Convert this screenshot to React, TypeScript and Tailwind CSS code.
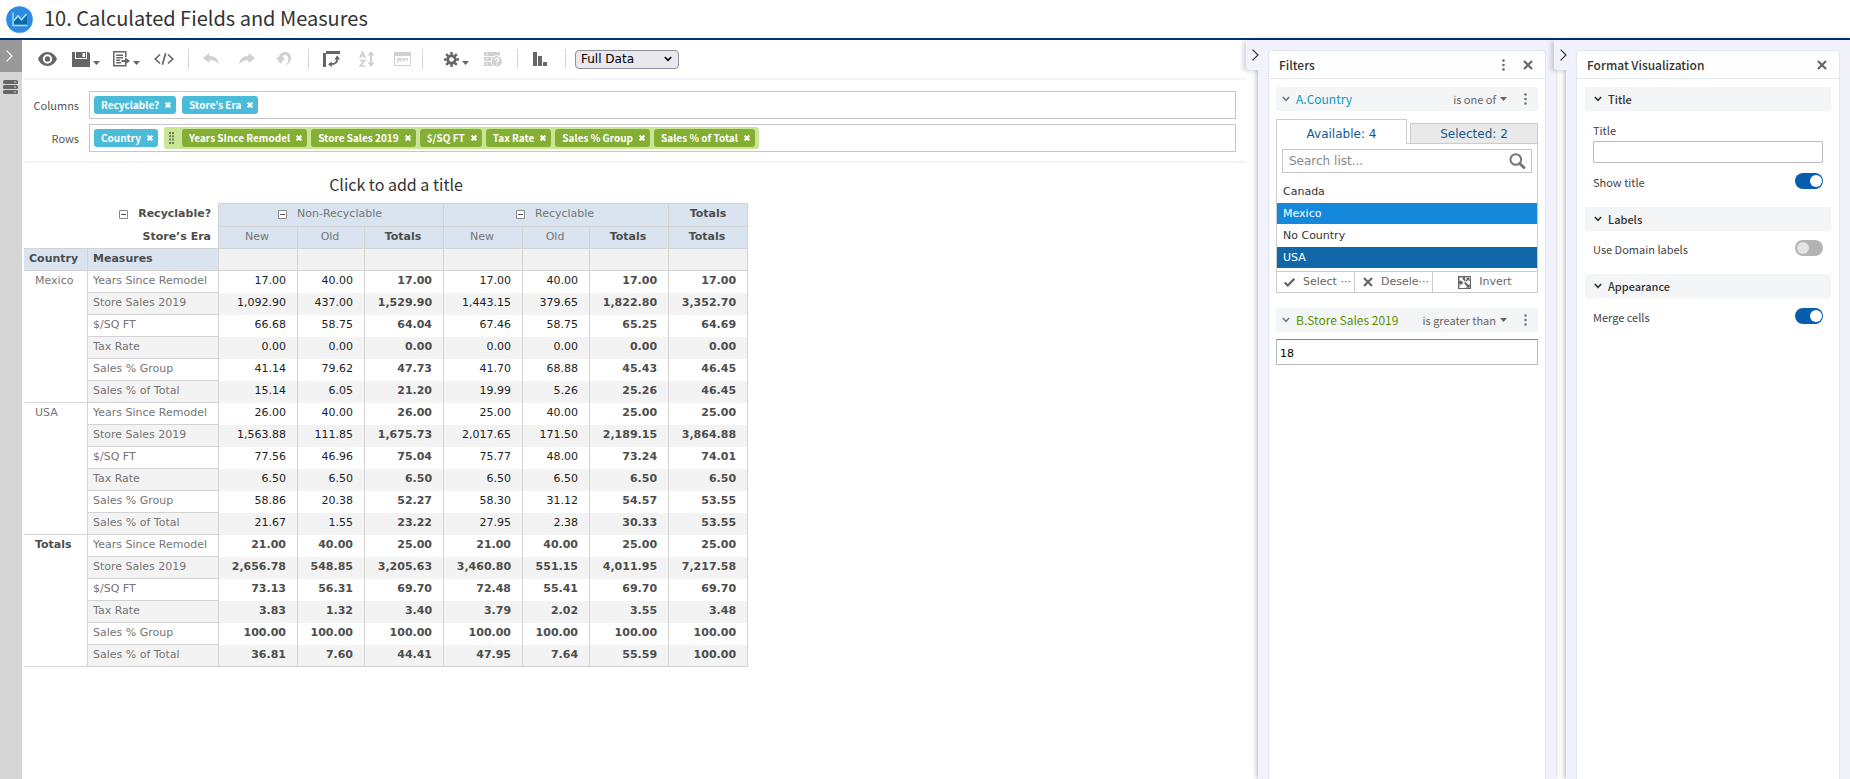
import React, { useState } from 'react';

type Row = { measure: string; values: string[] };
type Group = { name: string; total?: boolean; rows: Row[] };

const MEASURES = ['Years Since Remodel', 'Store Sales 2019', '$/SQ FT', 'Tax Rate', 'Sales % Group', 'Sales % of Total'];

const makeRows = (lines: string[]): Row[] =>
  lines.map((line, i) => ({ measure: MEASURES[i], values: line.split(' ') }));

const groups: Group[] = [
  {
    name: 'Mexico',
    rows: makeRows([
      '17.00 40.00 17.00 17.00 40.00 17.00 17.00',
      '1,092.90 437.00 1,529.90 1,443.15 379.65 1,822.80 3,352.70',
      '66.68 58.75 64.04 67.46 58.75 65.25 64.69',
      '0.00 0.00 0.00 0.00 0.00 0.00 0.00',
      '41.14 79.62 47.73 41.70 68.88 45.43 46.45',
      '15.14 6.05 21.20 19.99 5.26 25.26 46.45',
    ]),
  },
  {
    name: 'USA',
    rows: makeRows([
      '26.00 40.00 26.00 25.00 40.00 25.00 25.00',
      '1,563.88 111.85 1,675.73 2,017.65 171.50 2,189.15 3,864.88',
      '77.56 46.96 75.04 75.77 48.00 73.24 74.01',
      '6.50 6.50 6.50 6.50 6.50 6.50 6.50',
      '58.86 20.38 52.27 58.30 31.12 54.57 53.55',
      '21.67 1.55 23.22 27.95 2.38 30.33 53.55',
    ]),
  },
  {
    name: 'Totals',
    total: true,
    rows: makeRows([
      '21.00 40.00 25.00 21.00 40.00 25.00 25.00',
      '2,656.78 548.85 3,205.63 3,460.80 551.15 4,011.95 7,217.58',
      '73.13 56.31 69.70 72.48 55.41 69.70 69.70',
      '3.83 1.32 3.40 3.79 2.02 3.55 3.48',
      '100.00 100.00 100.00 100.00 100.00 100.00 100.00',
      '36.81 7.60 44.41 47.95 7.64 55.59 100.00',
    ]),
  },
];

const eraHeads = ['New', 'Old', 'Totals', 'New', 'Old', 'Totals', 'Totals'];
const greenFields = ['Years SInce Remodel', 'Store Sales 2019', '$/SQ FT', 'Tax Rate', 'Sales % Group', 'Sales % of Total'];

const Caret = () => (
  <svg width="7" height="4" viewBox="0 0 7 4" fill="currentColor" aria-hidden="true"><path d="M0 0h7L3.500 4z" /></svg>
);

const Chevron: React.FC<{ className?: string }> = ({ className = '' }) => (
  <svg className={className} width="8" height="6" viewBox="0 0 8 6" fill="none" stroke="currentColor" strokeWidth="1.6" aria-hidden="true">
    <path d="M.8 1 4 4.400 7.200 1" />
  </svg>
);

const SideChevron: React.FC<{ className?: string }> = ({ className = '' }) => (
  <svg className={className} width="7" height="12" viewBox="0 0 7 12" fill="none" stroke="currentColor" strokeWidth="1.2" aria-hidden="true">
    <path d="M.6.6 6 6 .6 11.400" />
  </svg>
);

const Kebab = () => (
  <svg width="3" height="12" viewBox="0 0 3 12" fill="currentColor" aria-hidden="true">
    <circle cx="1.500" cy="1.500" r="1.300" /><circle cx="1.500" cy="6" r="1.300" /><circle cx="1.500" cy="10.500" r="1.300" />
  </svg>
);

const Cross = () => (
  <svg width="10" height="10" viewBox="0 0 10 10" fill="none" stroke="currentColor" strokeWidth="2.200" aria-hidden="true">
    <path d="m1 1 8 8M9 1 1 9" />
  </svg>
);

const MinusBox = () => (
  <svg width="9" height="9" viewBox="0 0 9 9" aria-hidden="true">
    <path d="M.5.5h8v8h-8z" fill="#fff" stroke="#8a8a8a" /><path d="M2 4.500h5" stroke="#555" />
  </svg>
);

const ToolButton: React.FC<{ label: string; className?: string; disabled?: boolean; menu?: boolean; children: React.ReactNode }> = ({
  label, className = 'w-9', disabled, menu, children,
}) => (
  <button
    type="button"
    aria-label={label}
    disabled={disabled}
    className={`flex h-8 items-center justify-center ${disabled ? 'text-[#d0d0d0]' : 'text-[#666]'} ${className}`}
  >
    {children}
    {menu && <span className="ml-[3px] mt-2"><Caret /></span>}
  </button>
);

const Separator: React.FC<{ className?: string }> = ({ className = 'ml-[7px] mr-1' }) => (
  <span className={`h-5 w-px bg-[#d6d6d6] ${className}`} />
);

const Toolbar = () => (
  <div className="flex h-10 items-center border-b-2 border-[#f2f2fa] pl-[5px]">
    <ToolButton label="Preview">
      <svg width="19" height="14" viewBox="0 0 19 14" aria-hidden="true">
        <path fill="currentColor" fillRule="evenodd" d="M9.500 0C5 0 1.700 3 0 7c1.700 4 5 7 9.500 7S17.300 11 19 7C17.300 3 14 0 9.500 0Zm0 2.300a4.700 4.700 0 1 1 0 9.400 4.700 4.700 0 0 1 0-9.400Zm0 2a2.700 2.700 0 1 0 0 5.400 2.700 2.700 0 0 0 0-5.400Z" />
      </svg>
    </ToolButton>
    <ToolButton label="Save" menu className="w-[41px]">
      <svg width="18" height="15" viewBox="0 0 18 15" aria-hidden="true">
        <path fill="currentColor" fillRule="evenodd" d="M0 0h3v7h12V0h1.500L18 1.500V15H0V0Zm4 0h10v6H4V0Zm6.500 1v4H13V1h-2.500Z" />
      </svg>
    </ToolButton>
    <ToolButton label="Export" menu className="w-10">
      <svg width="17" height="16" viewBox="0 0 17 16" fill="none" stroke="currentColor" strokeWidth="1.500" aria-hidden="true">
        <path d="M12.800 6V.8H.8v14h12V13" /><path d="M3.200 4.300H10M3.200 6.800H10M3.200 9.300h4M3.200 11.800H8" strokeWidth="1.400" />
        <path d="M8.500 10H13" strokeWidth="2" /><path d="M12 6.200 17 10l-5 3.800z" fill="currentColor" stroke="none" />
      </svg>
    </ToolButton>
    <ToolButton label="View query">
      <svg width="20" height="12" viewBox="0 0 20 12" fill="none" stroke="currentColor" strokeWidth="1.700" aria-hidden="true">
        <path d="M6 1.500 1.200 6 6 10.500M14 1.500 18.800 6 14 10.500M11.600.3 8.400 11.700" />
      </svg>
    </ToolButton>
    <Separator className="ml-1.5 mr-1" />
    <ToolButton label="Undo" disabled>
      <svg width="16" height="12" viewBox="0 0 16 12" fill="currentColor" aria-hidden="true">
        <path d="M6.500 0v3C12 3 15.500 6 16 12c-2-3.500-5-4.800-9.500-4.800v3L0 5.100z" />
      </svg>
    </ToolButton>
    <ToolButton label="Redo" disabled>
      <svg width="16" height="12" viewBox="0 0 16 12" fill="currentColor" aria-hidden="true">
        <path d="M9.500 0v3C4 3 .5 6 0 12c2-3.500 5-4.800 9.500-4.800v3L16 5.100z" />
      </svg>
    </ToolButton>
    <ToolButton label="Undo all" disabled>
      <svg width="15" height="14" viewBox="0 0 15 14" fill="currentColor" aria-hidden="true">
        <path d="M2.400 5.500C3.300 2 6 0 9.300 0 12.700 0 15 2.500 15 5.800c0 3.400-2.200 6.200-5.500 8.200 1.900-2.600 3-4.800 2.800-7C12.200 4.600 11 3 9.200 3 7.700 3 6.600 4 6.200 5.500h3L4.500 12 0 5.500z" />
      </svg>
    </ToolButton>
    <Separator />
    <ToolButton label="Switch to crosstab">
      <svg width="17" height="16" viewBox="0 0 17 16" aria-hidden="true">
        <path d="M0 2h3v14H0zM3 0h14v3H3z" fill="currentColor" />
        <path d="M14.200 8c0 3.800-2.400 5.200-6.200 5.200" fill="none" stroke="currentColor" strokeWidth="1.800" />
        <path d="m14.200 4.200 2.800 4.300h-5.600zM5 13.200l3.800-2.800V16z" fill="currentColor" />
      </svg>
    </ToolButton>
    <ToolButton label="Sort" disabled>
      <svg width="16" height="16" viewBox="0 0 16 16" fill="none" stroke="currentColor" strokeWidth="1.700" aria-hidden="true">
        <path d="M.8 7 3.500.8 6.200 7M1.600 5h3.800M.7 9.600h5L.9 15h5.200" />
        <path d="M12 3v10" strokeWidth="2" /><path d="m12 0 3.500 4.500h-7zM12 16l3.500-4.500h-7z" fill="currentColor" stroke="none" />
      </svg>
    </ToolButton>
    <ToolButton label="Input controls" disabled className="w-[35px]">
      <svg width="17" height="14" viewBox="0 0 17 14" aria-hidden="true">
        <path fill="currentColor" fillRule="evenodd" d="M0 0h17v14H0V0Zm1 4v9h15V4H1Z" />
        <path fill="currentColor" d="M3 6h11v3.500h-1.500V8H11v1.500H9.500V8H8v2H6.500V9H5v2H3z" opacity=".75" />
      </svg>
    </ToolButton>
    <Separator className="ml-0.5 mr-3" />
    <ToolButton label="Options" menu className="w-[42px]">
      <svg width="15" height="15" viewBox="0 0 16 16" aria-hidden="true">
        <circle cx="8" cy="8" r="4" fill="none" stroke="currentColor" strokeWidth="3" />
        <path d="M8 0v3M8 13v3M0 8h3M13 8h3M2.300 2.300l2.200 2.200M11.500 11.500l2.200 2.200M2.300 13.700l2.200-2.200M11.500 4.500l2.200-2.200" stroke="currentColor" strokeWidth="2.600" />
      </svg>
    </ToolButton>
    <ToolButton label="Domain details" disabled className="w-8">
      <svg width="18" height="15" viewBox="0 0 18 15" aria-hidden="true">
        <rect width="16" height="4" rx="1" fill="currentColor" /><rect y="5" width="16" height="4" rx="1" fill="currentColor" />
        <rect y="10" width="12" height="4" rx="1" fill="currentColor" />
        <path d="M2 2h2M2 7h2M2 12h2" stroke="#fff" strokeWidth="1.200" />
        <circle cx="12.800" cy="9.300" r="5.600" fill="currentColor" stroke="#fff" />
        <path d="M11 8c0-2.300 3.700-2.300 3.700-.2 0 1.300-1.800 1.200-1.800 2.800M12.900 11.600v1.300" fill="none" stroke="#fff" strokeWidth="1.300" />
      </svg>
    </ToolButton>
    <Separator className="ml-2 mr-1" />
    <ToolButton label="Chart type">
      <svg width="14" height="14" viewBox="0 0 14 14" fill="currentColor" aria-hidden="true">
        <path d="M0 0h4v14H0zM5 4h4v10H5zM10 10h4v4h-4z" />
      </svg>
    </ToolButton>
    <Separator className="ml-[7px] mr-[9px]" />
    <div className="relative flex items-center">
      <select
        aria-label="Data level"
        className="h-[19px] w-[104px] appearance-none rounded-[4px] border border-[#8f8f9d] bg-[#e9e9ed] pl-[5px] font-['DejaVu_Sans',sans-serif] text-[12px] leading-[17px] text-black"
      >
        <option>Full Data</option>
        <option>Sample Data</option>
      </select>
      <Chevron className="pointer-events-none absolute right-[7px] text-black" />
    </div>
  </div>
);

const Pill: React.FC<{ label: string; tone: string }> = ({ label, tone }) => (
  <span className={`flex h-[18px] items-center rounded-[3px] pl-[7px] pr-[5px] text-[10px] font-bold leading-[18px] text-white ${tone}`}>
    {label}
    <button type="button" aria-label={`Remove ${label}`} className="ml-1.5">
      <svg width="6" height="6" viewBox="0 0 6 6" stroke="currentColor" strokeWidth="2.200" aria-hidden="true"><path d="m.6.6 4.800 4.800M5.400.6.6 5.400" /></svg>
    </button>
  </span>
);

const Shelves = () => (
  <div className="flex flex-col gap-[5px] border-b-2 border-[#f2f2fa] pb-[9px] pl-[5px] pr-[10px] pt-[11px]">
    <div className="flex items-center gap-[10px]">
      <span className="w-[50px] text-right text-[11px] text-[#555]">Columns</span>
      <div className="flex h-7 flex-1 items-center gap-1.5 border border-[#c6c6c6] pl-1">
        <Pill label="Recyclable?" tone="bg-[#4bbbda]" />
        <Pill label="Store’s Era" tone="bg-[#4bbbda]" />
      </div>
    </div>
    <div className="flex items-center gap-[10px]">
      <span className="w-[50px] text-right text-[11px] text-[#555]">Rows</span>
      <div className="flex h-7 flex-1 items-center gap-1.5 border border-[#c6c6c6] pl-1">
        <Pill label="Country" tone="bg-[#4bbbda]" />
        <div className="flex h-[22px] items-center gap-1 rounded-[3px] bg-[#c8e696] pl-[5px] pr-1">
          <svg className="mr-1" width="5" height="12" viewBox="0 0 5 12" fill="#6f7f55" aria-hidden="true">
            <path d="M0 0h2v2H0zM3 0h2v2H3zM0 3.300h2v2H0zM3 3.300h2v2H3zM0 6.600h2v2H0zM3 6.600h2v2H3zM0 10h2v2H0zM3 10h2v2H3z" />
          </svg>
          {greenFields.map((f) => <Pill key={f} label={f} tone="bg-[#84ae34]" />)}
        </div>
      </div>
    </div>
  </div>
);

const isTotalCol = (i: number) => i === 2 || i === 5 || i === 6;

const Crosstab = () => (
  <table className="w-[724px] table-fixed border-separate border-spacing-0 font-['DejaVu_Sans',sans-serif] text-[11px] leading-5 text-[#757575]">
    <colgroup>
      <col className="w-[64px]" /><col className="w-[131px]" />
      <col className="w-[79px]" /><col className="w-[67px]" /><col className="w-[79px]" />
      <col className="w-[79px]" /><col className="w-[67px]" /><col className="w-[79px]" />
      <col className="w-[79px]" />
    </colgroup>
    <thead>
      <tr className="h-6 align-top">
        <th colSpan={2} className="border-r border-t border-[#d3d3d3] border-t-transparent p-0 pr-[7px] text-[#4d4d4d]">
          <span className="flex items-center justify-end gap-[10px]"><MinusBox />Recyclable?</span>
        </th>
        {['Non-Recyclable', 'Recyclable'].map((name) => (
          <th key={name} colSpan={3} className="border-y border-r border-[#d3d3d3] bg-[#d9e4f0] p-0 pr-0.5 font-normal">
            <span className="flex items-center justify-center gap-[10px]"><MinusBox />{name}</span>
          </th>
        ))}
        <th className="border-y border-r border-[#d3d3d3] bg-[#d9e4f0] p-0 text-[#4d4d4d]">Totals</th>
      </tr>
      <tr className="h-[22px] align-top">
        <th colSpan={2} className="border-b border-r border-[#d3d3d3] p-0 pr-[7px] text-right text-[#4d4d4d]">Store’s Era</th>
        {eraHeads.map((h, i) => (
          <th key={i} className={`border-b border-r border-[#d3d3d3] bg-[#d9e4f0] p-0 pr-0.5 ${isTotalCol(i) ? 'text-[#4d4d4d]' : 'font-normal'}`}>{h}</th>
        ))}
      </tr>
      <tr className="h-[22px] text-left align-top text-[#4d4d4d]">
        <th className="border-b border-r border-[#d3d3d3] bg-[#d9e4f0] p-0 pl-[5px]">Country</th>
        <th className="border-b border-r border-[#d3d3d3] bg-[#d9e4f0] p-0 pl-[5px]">Measures</th>
        {eraHeads.map((_, i) => <td key={i} className="border-b border-r border-[#d3d3d3] bg-[#f1f1f1] p-0" />)}
      </tr>
    </thead>
    <tbody>
      {groups.map((g, gi) => g.rows.map((row, ri) => (
        <tr key={g.name + row.measure} className="h-[22px] align-top">
          {ri === 0 && (
            <th rowSpan={6} className={`border-b border-r border-[#d3d3d3] p-0 pl-[11px] text-left ${g.total ? 'text-[#4d4d4d]' : 'font-normal'}`}>
              {g.name}
            </th>
          )}
          <th className={`whitespace-nowrap border-b border-r border-[#d3d3d3] p-0 pl-[5px] text-left font-normal ${ri % 2 ? 'bg-[#f3f3f3]' : ''}`}>
            {row.measure}
          </th>
          {row.values.map((v, i) => (
            <td
              key={i}
              className={`border-r border-[#d3d3d3] p-0 pr-[11px] text-right ${ri % 2 ? 'bg-[#f3f3f3]' : ''} ${g.total || isTotalCol(i) ? 'font-bold text-[#4d4d4d]' : 'text-[#222]'} ${gi === 2 && ri === 5 ? 'border-b' : ''}`}
            >
              {v}
            </td>
          ))}
        </tr>
      )))}
    </tbody>
  </table>
);

// Side panel with its collapse tab on the left rail
const SidePanel: React.FC<{ title: string; menu?: boolean; width: string; children: React.ReactNode }> = ({ title, menu, width, children }) => (
  <section className={`relative flex shrink-0 ${width}`}>
    <button
      type="button"
      aria-label={`Collapse ${title}`}
      className="absolute -left-3 top-0 z-10 flex h-[30px] w-3.5 items-center justify-end rounded-bl-[3px] bg-[#f2f2fc] pr-px text-[#333] shadow-[-3px_1px_4px_rgba(0,0,0,0.16)]"
    >
      <SideChevron />
    </button>
    <div className="flex flex-1 flex-col bg-[#f2f2fc] px-[10px] pt-[10px] shadow-[-1px_0_5px_rgba(0,0,0,0.3)]">
      <div className="flex flex-1 flex-col rounded-t-[4px] border border-b-0 border-[#dfe7ea] bg-white">
        <header className="flex h-7 items-center border-b border-[#dfe7ea] pl-[10px] pr-3 text-[#666]">
          <h2 className="flex-1 text-[12px] font-medium text-[#333]">{title}</h2>
          {menu && <button type="button" aria-label="Filter options" className="mr-[18px]"><Kebab /></button>}
          <button type="button" aria-label={`Close ${title}`}><Cross /></button>
        </header>
        {children}
      </div>
    </div>
  </section>
);

const FilterHead: React.FC<{ name: string; tone: string; op: string }> = ({ name, tone, op }) => (
  <div className="flex h-6 items-center rounded-[2px] bg-[#f4f5f7] pl-[6px] pr-[11px] text-[#777]">
    <Chevron />
    <h3 className={`ml-[6px] flex-1 text-[12px] ${tone}`}>{name}</h3>
    <button type="button" className="flex items-center gap-1 text-[11px] text-[#666]">{op}<Caret /></button>
    <button type="button" aria-label={`${name} options`} className="ml-[17px]"><Kebab /></button>
  </div>
);

const options = ['Canada', 'Mexico', 'No Country', 'USA'];

const Filters = () => {
  const [picked, setPicked] = useState(['Mexico', 'USA']);
  const toggle = (o: string) => setPicked((p) => (p.includes(o) ? p.filter((x) => x !== o) : [...p, o]));
  const tone = (o: string) => {
    if (!picked.includes(o)) return 'text-[#333]';
    return o === 'USA' ? 'bg-[#1068ab] text-white' : 'bg-[#1488db] text-white';
  };

  return (
    <div className="flex flex-col px-[7px] pt-2">
      <FilterHead name="A.Country" tone="text-[#0f97bd]" op="is one of" />
      <div className="mt-2 font-['DejaVu_Sans',sans-serif] text-[12px]">
        <div className="flex items-end text-[#15588f]">
          <button type="button" className="h-[25px] w-[131px] border border-b-0 border-[#ccc] bg-white pt-1">Available: {options.length}</button>
          <span className="h-px w-[3px] bg-[#ccc]" />
          <button type="button" className="h-[21px] flex-1 border border-[#ccc] bg-[#e9e9e9]">Selected: {picked.length}</button>
        </div>
        <div className="border border-t-0 border-[#ccc]">
          <div className="px-[5px] pb-2 pt-[5px]">
            <label className="flex h-6 items-center border border-[#c6c6c6] pl-[6px] pr-[5px]">
              <input aria-label="Search list" placeholder="Search list..." className="min-w-0 flex-1 text-[#333] outline-none placeholder:text-[#888]" />
              <svg width="17" height="17" viewBox="0 0 17 17" fill="none" stroke="#777" aria-hidden="true">
                <circle cx="6.800" cy="6.500" r="5.300" strokeWidth="2" /><path d="m10.800 10.500 5 5" strokeWidth="3" />
              </svg>
            </label>
          </div>
          <div role="listbox" aria-label="Countries" className="flex flex-col gap-px pb-[3px]">
            {options.map((o) => (
              <button
                key={o}
                type="button"
                role="option"
                aria-selected={picked.includes(o)}
                onClick={() => toggle(o)}
                className={`h-[21px] pl-[6px] text-left text-[11px] ${tone(o)}`}
              >
                {o}
              </button>
            ))}
          </div>
          <div className="flex h-[21px] border-t border-[#ccc] text-[11px] text-[#666]">
            <button type="button" onClick={() => setPicked(options)} className="flex w-[78px] items-center gap-2 border-r border-[#ccc] pl-[7px]">
              <svg width="11" height="9" viewBox="0 0 11 9" fill="none" stroke="currentColor" strokeWidth="2.200" aria-hidden="true"><path d="m.8 4.500 3 3L10.300.8" /></svg>
              Select ···
            </button>
            <button type="button" onClick={() => setPicked([])} className="flex w-[78px] items-center gap-2 border-r border-[#ccc] pl-[8px]">
              <Cross />
              Desele···
            </button>
            <button
              type="button"
              onClick={() => setPicked(options.filter((o) => !picked.includes(o)))}
              className="flex flex-1 items-center justify-center gap-2"
            >
              <svg width="13" height="13" viewBox="0 0 13 13" aria-hidden="true">
                <path d="M0 0h13v13H0z" fill="currentColor" />
                <path d="M7 1h5v11H1l4-4.500L7.500 6z" fill="#fff" />
                <path d="M1.500 1.500h4L4.200 2.800l3 3-1.400 1.400-3-3-1.300 1.300z" fill="#fff" />
                <path d="M11.800 11.800h-4l1.300-1.300-3-3 1.400-1.400 3 3 1.300-1.300zM11.500 1.500v4L10 4 8.500 5.500 7.500 4.500 9 3 7.500 1.500z" fill="currentColor" />
                <path d="M1.500 11.500v-4L3 9l2-2 1 1-2 2 1.500 1.500z" fill="#fff" />
              </svg>
              Invert
            </button>
          </div>
        </div>
      </div>
      <div className="mt-[15px] flex flex-col gap-[7px]">
        <FilterHead name="B.Store Sales 2019" tone="text-[#5b8f00]" op="is greater than" />
        <input
          aria-label="Store Sales 2019"
          defaultValue="18"
          className="h-[26px] border border-[#bbb] border-t-[#888] pl-[3px] pt-0.5 font-['DejaVu_Sans',sans-serif] text-[11px] text-black outline-none"
        />
      </div>
    </div>
  );
};

const SectionHead: React.FC<{ children: React.ReactNode }> = ({ children }) => (
  <h3 className="flex h-6 items-center gap-1.5 rounded-[2px] bg-[#f4f5f7] pl-[9px] text-[11px] font-medium text-[#333]"><Chevron />{children}</h3>
);

const Toggle: React.FC<{ label: string; on?: boolean }> = ({ label, on }) => (
  <label className="flex h-4 items-center justify-between text-[11px] text-[#444]">
    <span className="pt-0.5">{label}</span>
    <input
      type="checkbox"
      role="switch"
      defaultChecked={on}
      className="flex h-4 w-7 appearance-none items-center rounded-full bg-[#b3b3b3] px-0.5 before:size-3 before:rounded-full before:bg-[#e3e3e3] before:content-[''] checked:justify-end checked:bg-[#065dae] checked:px-px checked:before:bg-white"
    />
  </label>
);

const FormatPanel = () => (
  <div className="flex flex-col px-2 pt-2">
    <SectionHead>Title</SectionHead>
    <div className="flex flex-col px-2 pb-[18px] pt-[9px]">
      <label htmlFor="viz-title" className="mb-px text-[11px] leading-5 text-[#444]">Title</label>
      <input id="viz-title" className="mb-[10px] h-[22px] rounded-[2px] border border-[#bbb] px-1 text-[11px] outline-none" />
      <Toggle label="Show title" on />
    </div>
    <SectionHead>Labels</SectionHead>
    <div className="px-2 pb-[18px] pt-[9px]"><Toggle label="Use Domain labels" /></div>
    <SectionHead>Appearance</SectionHead>
    <div className="px-2 pt-[10px]"><Toggle label="Merge cells" on /></div>
  </div>
);

export default function App() {
  return (
    <div className="flex min-h-screen flex-col bg-white font-['Noto_Sans_CJK_KR',sans-serif] text-[12px] leading-4 text-[#333]">
      <header className="flex h-10 items-center gap-[11px] border-b-2 border-[#06307c] pl-[6px]">
        <svg width="27" height="27" viewBox="0 0 27 27" aria-hidden="true">
          <circle cx="13.500" cy="13.500" r="13.300" fill="#2f8be0" />
          <path d="M8 18.500v-4l4-4 3.500 3.500L21 9v9.500z" fill="#0a6aa6" />
          <path d="M8 14.500l4-4.500 3.500 3.800L20.500 8" fill="none" stroke="#9fe0f5" strokeWidth="1.600" />
          <path d="M7 6.500v13h14.500" fill="none" stroke="#9fe0f5" strokeWidth="1.400" />
        </svg>
        <h1 className="pb-0.5 text-[20px] leading-6 text-[#333]">10. Calculated Fields and Measures</h1>
      </header>
      <div className="flex flex-1">
        <aside className="flex w-[22px] shrink-0 flex-col bg-[#d6d6d6]">
          <button type="button" aria-label="Expand data source" className="flex h-8 w-full items-center justify-center bg-[#999] pr-1 text-white"><SideChevron /></button>
          <button type="button" aria-label="Data source" className="mt-2 pl-[3px] text-[#666]">
            <svg width="15" height="14" viewBox="0 0 15 14" aria-hidden="true">
              <rect width="15" height="4" rx="1.500" fill="currentColor" /><rect y="5" width="15" height="4" rx="1.500" fill="currentColor" /><rect y="10" width="15" height="4" rx="1.500" fill="currentColor" />
              <path d="M11 2h2M11 7h2M11 12h2" stroke="#d6d6d6" />
            </svg>
          </button>
        </aside>
        <main className="min-w-0 flex-1 pl-0.5">
          <Toolbar />
          <Shelves />
          <div className="w-[724px]">
            <button type="button" className="block h-10 w-full pb-0 pl-5 pt-0.5 text-[16px] leading-6">Click to add a title</button>
            <Crosstab />
          </div>
        </main>
        <div className="w-3 shrink-0" />
        <SidePanel title="Filters" menu width="w-[298px]"><Filters /></SidePanel>
        <div className="w-[10px] shrink-0" />
        <SidePanel title="Format Visualization" width="w-[284px]"><FormatPanel /></SidePanel>
      </div>
    </div>
  );
}
